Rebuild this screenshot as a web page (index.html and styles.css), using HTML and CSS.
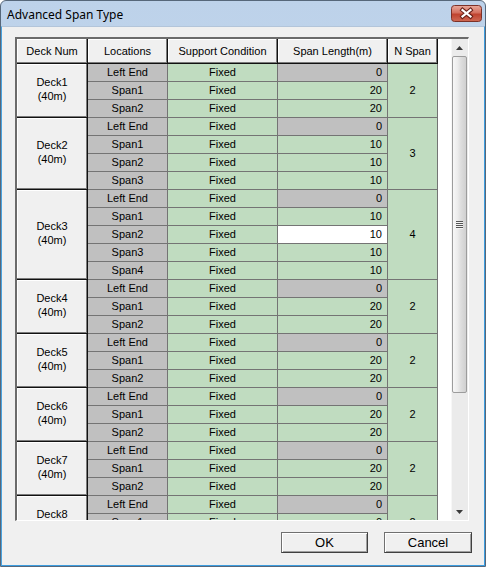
FILE: index.html
```html
<!DOCTYPE html>
<html>
<head>
<meta charset="utf-8">
<title>Advanced Span Type</title>
<link rel="stylesheet" href="styles.css">
</head>
<body>
<div class="window">
  <div class="titlebar">
    <span class="title">Advanced Span Type</span>
    <svg class="close" width="31" height="17" viewBox="0 0 31 17">
      <defs>
        <linearGradient id="cg" x1="0" y1="0" x2="0" y2="1">
          <stop offset="0" stop-color="#e9aa9c"/>
          <stop offset="0.45" stop-color="#d4705f"/>
          <stop offset="0.55" stop-color="#c0432f"/>
          <stop offset="1" stop-color="#cf6a55"/>
        </linearGradient>
      </defs>
      <rect x="0.5" y="0.5" width="30" height="16" rx="3" fill="url(#cg)" stroke="#7c3128"/>
      <path d="M11.5 5 L19.5 11.5 M19.5 5 L11.5 11.5" stroke="#6a2018" stroke-width="4.2" stroke-linecap="square"/>
      <path d="M11.5 5 L19.5 11.5 M19.5 5 L11.5 11.5" stroke="#ffffff" stroke-width="2.2" stroke-linecap="square"/>
    </svg>
  </div>
  <div class="client">
    <div class="grid-frame">
      <div class="grid-view">
        <div class="grid">
          <div class="hd">Deck Num</div>
          <div class="hd">Locations</div>
          <div class="hd">Support Condition</div>
          <div class="hd">Span Length(m)</div>
          <div class="hd">N Span</div>

          <div class="dk r3">Deck1<br>(40m)</div>
          <div class="loc">Left End</div><div class="sup">Fixed</div><div class="len z">0</div><div class="ns r3">2</div>
          <div class="loc">Span1</div><div class="sup">Fixed</div><div class="len">20</div>
          <div class="loc">Span2</div><div class="sup">Fixed</div><div class="len">20</div>

          <div class="dk r4">Deck2<br>(40m)</div>
          <div class="loc">Left End</div><div class="sup">Fixed</div><div class="len z">0</div><div class="ns r4">3</div>
          <div class="loc">Span1</div><div class="sup">Fixed</div><div class="len">10</div>
          <div class="loc">Span2</div><div class="sup">Fixed</div><div class="len">10</div>
          <div class="loc">Span3</div><div class="sup">Fixed</div><div class="len">10</div>

          <div class="dk r5">Deck3<br>(40m)</div>
          <div class="loc">Left End</div><div class="sup">Fixed</div><div class="len z">0</div><div class="ns r5">4</div>
          <div class="loc">Span1</div><div class="sup">Fixed</div><div class="len">10</div>
          <div class="loc">Span2</div><div class="sup">Fixed</div><div class="len edit">10</div>
          <div class="loc">Span3</div><div class="sup">Fixed</div><div class="len">10</div>
          <div class="loc">Span4</div><div class="sup">Fixed</div><div class="len">10</div>

          <div class="dk r3">Deck4<br>(40m)</div>
          <div class="loc">Left End</div><div class="sup">Fixed</div><div class="len z">0</div><div class="ns r3">2</div>
          <div class="loc">Span1</div><div class="sup">Fixed</div><div class="len">20</div>
          <div class="loc">Span2</div><div class="sup">Fixed</div><div class="len">20</div>

          <div class="dk r3">Deck5<br>(40m)</div>
          <div class="loc">Left End</div><div class="sup">Fixed</div><div class="len z">0</div><div class="ns r3">2</div>
          <div class="loc">Span1</div><div class="sup">Fixed</div><div class="len">20</div>
          <div class="loc">Span2</div><div class="sup">Fixed</div><div class="len">20</div>

          <div class="dk r3">Deck6<br>(40m)</div>
          <div class="loc">Left End</div><div class="sup">Fixed</div><div class="len z">0</div><div class="ns r3">2</div>
          <div class="loc">Span1</div><div class="sup">Fixed</div><div class="len">20</div>
          <div class="loc">Span2</div><div class="sup">Fixed</div><div class="len">20</div>

          <div class="dk r3">Deck7<br>(40m)</div>
          <div class="loc">Left End</div><div class="sup">Fixed</div><div class="len z">0</div><div class="ns r3">2</div>
          <div class="loc">Span1</div><div class="sup">Fixed</div><div class="len">20</div>
          <div class="loc">Span2</div><div class="sup">Fixed</div><div class="len">20</div>

          <div class="dk r3">Deck8<br>(40m)</div>
          <div class="loc">Left End</div><div class="sup">Fixed</div><div class="len z">0</div><div class="ns r3">2</div>
          <div class="loc">Span1</div><div class="sup">Fixed</div><div class="len">0</div>
          <div class="loc">Span2</div><div class="sup">Fixed</div><div class="len">0</div>
        </div>
      </div>
      <div class="vscroll">
        <div class="sb-btn">
          <svg width="7" height="4" viewBox="0 0 7 4"><polygon points="0,4 3.5,0 7,4" fill="#3a3a3a"/></svg>
        </div>
        <div class="sb-track">
          <div class="thumb"><span class="grip"></span></div>
        </div>
        <div class="sb-btn">
          <svg width="7" height="4" viewBox="0 0 7 4"><polygon points="0,0 7,0 3.5,4" fill="#3a3a3a"/></svg>
        </div>
      </div>
    </div>
    <div class="footer">
      <button class="btn ok">OK</button>
      <button class="btn">Cancel</button>
    </div>
  </div>
</div>
</body>
</html>
```

FILE: styles.css
```css
html, body {
  margin: 0;
  padding: 0;
  background: #ffffff;
}

.window {
  box-sizing: border-box;
  width: 486px;
  height: 567px;
  border: 1px solid #56677a;
  border-radius: 6px 6px 0 0;
  background: linear-gradient(#bdd2ea, #cbdcef 60%, #d3e2f2);
  display: flex;
  flex-direction: column;
  overflow: hidden;
}

.titlebar {
  height: 25px;
  flex: none;
  display: flex;
  align-items: center;
  justify-content: space-between;
  padding: 0 3px 0 6px;
}

.title {
  font: 12px "Noto Sans", "Open Sans", sans-serif;
  color: #000;
  padding-top: 1px;
}

.close {
  display: block;
}

.client {
  flex: 1;
  display: flex;
  flex-direction: column;
  background: #f0f0f0;
  border-top: 1px solid #b3c5da;
  border-left: 1px solid #4aa3df;
  border-right: 1px solid #3c9de0;
  border-bottom: 1px solid #3c9de0;
  padding: 10px 0 0 13px;
}

.grid-frame {
  box-sizing: border-box;
  width: 454px;
  height: 484px;
  flex: none;
  display: flex;
  border-top: 2px solid #6b6b6b;
  border-left: 2px solid #6b6b6b;
  border-right: 1px solid #ffffff;
  border-bottom: 1px solid #ffffff;
}

.grid-view {
  flex: 1;
  background: #ffffff;
  overflow: hidden;
}

.grid {
  display: grid;
  grid-template-columns: 71px 80px 110px 110px 50px;
  grid-template-rows: 25px;
  grid-auto-rows: 18px;
  font: 11px "Liberation Sans", Arial, sans-serif;
  color: #000;
}

.grid > div {
  box-sizing: border-box;
  border-right: 1px solid #747474;
  border-bottom: 1px solid #747474;
  display: flex;
  align-items: center;
  justify-content: center;
  text-align: center;
  white-space: nowrap;
  overflow: hidden;
  padding-bottom: 1px;
}

.grid > .hd,
.grid > .dk {
  background: #f0f0f0;
  border-right: 1px solid #111111;
  border-bottom: 1px solid #111111;
  box-shadow: inset -1px -1px 0 #7a7a7a, inset 1px 1px 0 #ffffff;
}

.grid > .hd {
  padding-bottom: 0;
}

.grid > .dk {
  grid-column: 1;
  line-height: 14px;
  padding-bottom: 3px;
}

.grid > .loc {
  grid-column: 2;
  background: #c0c0c0;
}

.grid > .sup {
  grid-column: 3;
  background: #c0dcc0;
}

.grid > .len {
  grid-column: 4;
  background: #c0dcc0;
  justify-content: flex-end;
  padding-right: 5px;
}

.grid > .len.z {
  background: #c0c0c0;
}

.grid > .len.edit {
  background: #ffffff;
}

.grid > .ns {
  grid-column: 5;
  background: #c0dcc0;
}

.r3 { grid-row: span 3; }
.r4 { grid-row: span 4; }
.r5 { grid-row: span 5; }

.vscroll {
  width: 17px;
  flex: none;
  display: flex;
  flex-direction: column;
  background: #ebebeb;
  box-shadow: inset 1px 0 0 #f7f7f7;
}

.sb-btn {
  height: 17px;
  flex: none;
  display: flex;
  align-items: center;
  justify-content: center;
}

.sb-btn svg {
  display: block;
}

.sb-track {
  flex: 1;
  padding: 0 1px;
}

.thumb {
  box-sizing: border-box;
  height: 337px;
  border: 1px solid #9c9c9c;
  border-radius: 2px;
  background: linear-gradient(to right, #f7f7f7, #ececec 35%, #dedede 60%, #d0d0d0);
  display: flex;
  align-items: center;
  justify-content: center;
}

.grip {
  display: block;
  width: 7px;
  height: 8px;
  background: repeating-linear-gradient(#555555 0 1px, #f4f4f4 1px 2px);
}

.footer {
  display: flex;
  justify-content: flex-end;
  gap: 16px;
  margin-top: 11px;
  padding-right: 12px;
}

.btn {
  box-sizing: border-box;
  width: 88px;
  height: 21px;
  margin: 0;
  padding: 0;
  background: #f0f0f0;
  border: 1px solid #707070;
  border-right-color: #404040;
  border-bottom-color: #404040;
  box-shadow: inset 1px 1px 0 #ffffff, inset -1px -1px 0 #a0a0a0;
  font: 13px "Liberation Sans", Arial, sans-serif;
  color: #000;
}

.btn.ok {
  width: 87px;
}
```
